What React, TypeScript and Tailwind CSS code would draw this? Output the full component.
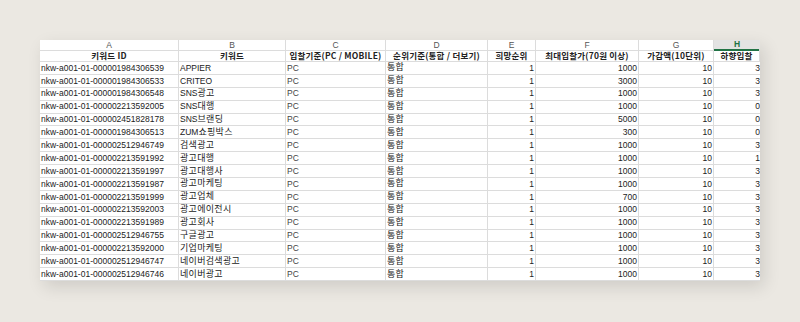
import React from 'react'

const cols = ['A', 'B', 'C', 'D', 'E', 'F', 'G', 'H']
const headers = ['키워드 ID', '키워드', '입찰기준(PC / MOBILE)', '순위기준(통합 / 더보기)', '희망순위', '최대입찰가(70원 이상)', '가감액(10단위)', '하향입찰']

const rows: [string, string, string, string][] = [
  ['000001984306539', 'APPIER', '1000', '3'],
  ['000001984306533', 'CRITEO', '3000', '3'],
  ['000001984306548', 'SNS광고', '1000', '3'],
  ['000002213592005', 'SNS대행', '1000', '0'],
  ['000002451828178', 'SNS브랜딩', '5000', '0'],
  ['000001984306513', 'ZUM쇼핑박스', '300', '0'],
  ['000002512946749', '검색광고', '1000', '3'],
  ['000002213591992', '광고대행', '1000', '1'],
  ['000002213591997', '광고대행사', '1000', '3'],
  ['000002213591987', '광고마케팅', '1000', '3'],
  ['000002213591999', '광고업체', '700', '3'],
  ['000002213592003', '광고에이전시', '1000', '3'],
  ['000002213591989', '광고회사', '1000', '3'],
  ['000002512946755', '구글광고', '1000', '3'],
  ['000002213592000', '기업마케팅', '1000', '3'],
  ['000002512946747', '네이버검색광고', '1000', '3'],
  ['000002512946746', '네이버광고', '1000', '3'],
]

const grid = 'grid grid-cols-[139px_107px_100px_102px_48px_103px_75px_46px]'
const cell = 'border-r border-b border-[#dcdcdc] overflow-hidden whitespace-nowrap flex items-center'

// Hangul glyphs render a touch wider than the Latin ones in the sheet
function Mixed({ text }: { text: string }) {
  const parts = text.split(/([\uac00-\ud7a3]+)/).filter(Boolean)
  return (
    <>
      {parts.map((p, i) =>
        /[\uac00-\ud7a3]/.test(p) ? (
          <span key={i} className="text-[9px] tracking-[0.3px]">{p}</span>
        ) : (
          <span key={i}>{p}</span>
        )
      )}
    </>
  )
}

export default function App() {
  return (
    <div className="w-[800px] h-[322px] bg-[#ebe8e2] pt-[40px] pl-[40px] overflow-hidden">
      <div
        className="w-[720px] bg-white overflow-hidden shadow-[4px_6px_16px_rgba(0,0,0,0.12)] text-[#222]"
        style={{ fontFamily: '"Liberation Sans", "Noto Sans CJK KR", sans-serif' }}
      >
        {/* Column letters */}
        <div className={`${grid} h-[9px]`}>
          {cols.map(c => (
            <div
              key={c}
              className={
                c === 'H'
                  ? 'bg-[#e3e3e3] border-b-2 border-[#217346] text-[#217346] font-bold text-[8.5px] leading-none flex items-center justify-center'
                  : 'border-r border-b border-[#dcdcdc] text-[#555] text-[8.5px] leading-none flex items-center justify-center'
              }
            >
              {c}
            </div>
          ))}
        </div>

        {/* Header row */}
        <div className={`${grid} h-[13px]`}>
          {headers.map(h => (
            <div key={h} className={`${cell} justify-center font-bold text-[8.5px] tracking-[0.2px]`} style={{ fontFamily: '"Noto Sans CJK KR", "Liberation Sans", sans-serif' }}>
              {h}
            </div>
          ))}
        </div>

        {/* Data rows */}
        {rows.map(([id, kw, max, down]) => (
          <div key={id} className={`${grid} h-[12.9px] text-[8.5px] leading-none`}>
            <div className={`${cell} pl-[1px]`}>nkw-a001-01-{id}</div>
            <div className={`${cell} pl-[1px]`}><Mixed text={kw} /></div>
            <div className={`${cell} pl-[1px] text-[#444]`}>PC</div>
            <div className={`${cell} pl-[1px]`}><Mixed text="통합" /></div>
            <div className={`${cell} justify-end pr-[1px]`}>1</div>
            <div className={`${cell} justify-end pr-[1px]`}>{max}</div>
            <div className={`${cell} justify-end pr-[1px]`}>10</div>
            <div className={`${cell} justify-end pr-0 border-r-0`}>{down}</div>
          </div>
        ))}
      </div>
    </div>
  )
}
